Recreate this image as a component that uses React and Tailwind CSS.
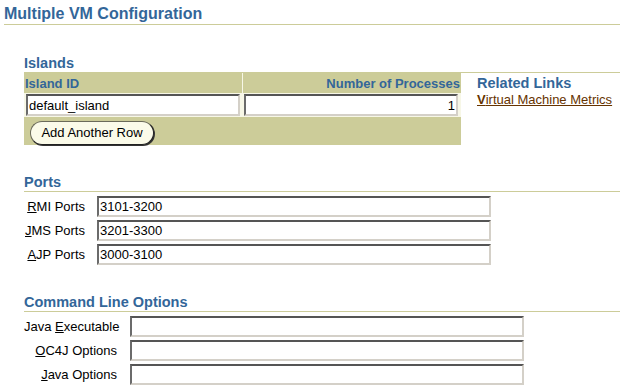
import React from "react";

const inputCls =
  "block h-[21px] bg-white border-t-2 border-l-2 border-b-2 border-r-2 border-t-[#555555] border-l-[#6b6b6b] border-b-[#d4d0c8] border-r-[#d4d0c8] text-[13px] leading-[17px] px-[1px] text-black outline-none";

function Field({ u, rest, pre = "", value = "", labelW, gap }) {
  return (
    <div className="flex items-center h-[21px]">
      <div className={`${labelW} text-right text-[13px] leading-[21px] whitespace-nowrap`}>
        {pre}
        <span className="underline">{u}</span>
        {rest}
      </div>
      <div className={gap}>
        <input readOnly value={value} className={`${inputCls} w-[394px]`} />
      </div>
    </div>
  );
}

export default function App() {
  return (
    <div className="w-[620px] h-[392px] overflow-hidden bg-white text-black font-['Liberation_Sans',Arial,sans-serif]">
      <div className="pl-[4px] pt-[4px]">
        <div className="h-[21px] border-b border-[#cccc99] text-[16px] leading-[20px] font-bold text-[#336699] whitespace-nowrap">
          Multiple VM Configuration
        </div>
      </div>

      <div className="pl-[24px] mt-[30px]">
        <div className="h-[18px] border-b border-[#cccc99] text-[14.5px] leading-[17px] font-bold text-[#336699]">
          Islands
        </div>
        <div className="flex">
          <div className="w-[437px] bg-[#cccc99]">
            <div className="flex h-[20px]">
              <div className="w-[218px] pl-[1px] text-[13px] leading-[21px] font-bold text-[#336699]">Island ID</div>
              <div className="w-[1px] bg-[#f7f7e7]" />
              <div className="w-[218px] pr-[1px] text-right text-[13px] leading-[21px] font-bold text-[#336699] whitespace-nowrap">
                Number of Processes
              </div>
            </div>
            <div className="flex bg-[#f7f7e7] py-[1px]">
              <div className="w-[218px] px-[2px]">
                <input readOnly value="default_island" className={`${inputCls} w-[214px] h-[22px]`} />
              </div>
              <div className="w-[1px]" />
              <div className="w-[218px] pl-[1px] pr-[3px]">
                <input readOnly value="1" className={`${inputCls} w-[214px] h-[22px] text-right`} />
              </div>
            </div>
            <div className="h-[28px] pt-[3px] pl-[6px]">
              <button className="h-[24px] w-[124px] rounded-full border border-[#6b6b5a] border-r-[#222222] border-b-[#222222] shadow-[1px_1px_0_#333333] bg-[#fbfbe9] text-[13px] leading-[20px] text-black">
                Add Another Row
              </button>
            </div>
          </div>
          <div className="ml-[16px] pt-[2px]">
            <div className="h-[17px] text-[14.5px] leading-[17px] font-bold text-[#336699] whitespace-nowrap">Related Links</div>
            <a href="#" className="block text-[13px] leading-[16px] text-[#663300] underline whitespace-nowrap">
              <span className="font-bold">V</span>irtual Machine Metrics
            </a>
          </div>
        </div>

        <div className="mt-[29px] h-[18px] border-b border-[#cccc99] text-[14.5px] leading-[17px] font-bold text-[#336699]">
          Ports
        </div>
        <div className="pt-[4px] flex flex-col gap-[3px]">
          <Field u="R" rest="MI Ports" value="3101-3200" labelW="w-[61px]" gap="ml-[12px]" />
          <Field u="J" rest="MS Ports" value="3201-3300" labelW="w-[61px]" gap="ml-[12px]" />
          <Field u="A" rest="JP Ports" value="3000-3100" labelW="w-[61px]" gap="ml-[12px]" />
        </div>

        <div className="mt-[29px] h-[18px] border-b border-[#cccc99] text-[14.5px] leading-[17px] font-bold text-[#336699] whitespace-nowrap">
          Command Line Options
        </div>
        <div className="pt-[4px] flex flex-col gap-[3px]">
          <Field pre="Java " u="E" rest="xecutable" labelW="w-[93px]" gap="ml-[13px]" />
          <Field u="O" rest="C4J Options" labelW="w-[93px]" gap="ml-[13px]" />
          <Field u="J" rest="ava Options" labelW="w-[93px]" gap="ml-[13px]" />
        </div>
      </div>
    </div>
  );
}
